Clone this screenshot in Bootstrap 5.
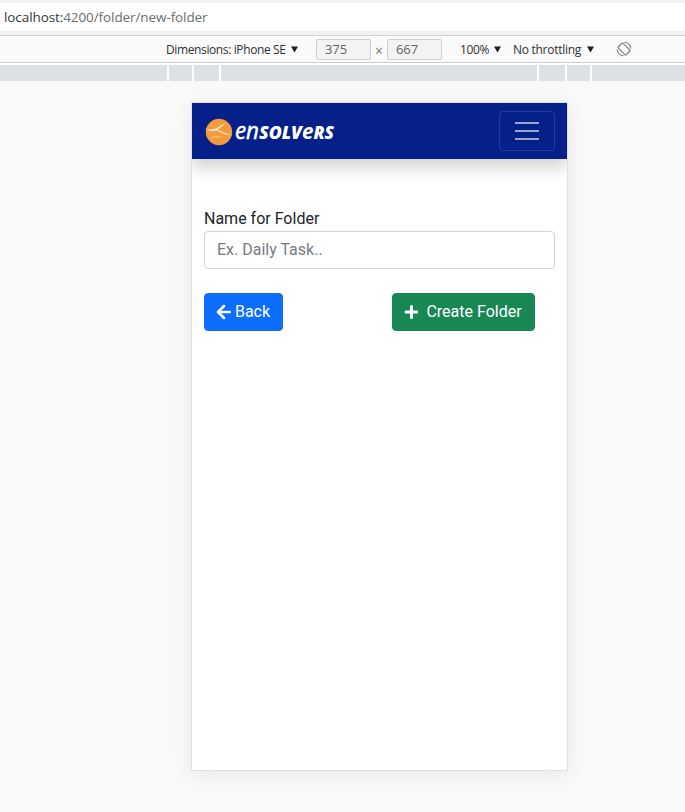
<!DOCTYPE html>
<html lang="en">
<head>
<meta charset="utf-8">
<meta name="viewport" content="width=device-width, initial-scale=1">
<title>New folder</title>
<link href="https://cdn.jsdelivr.net/npm/bootstrap@5.3.0/dist/css/bootstrap.min.css" rel="stylesheet">
<style>
body { background: #f9f9f9; height: 812px; overflow: hidden; font-family: Roboto, "Liberation Sans", sans-serif; }
.address-bar { height: 35px; border-top: 3px solid #f1f1f2; border-bottom: 4px solid #f1f1f2; font: 13.5px/28px "Open Sans", sans-serif; padding-left: 4px; color: #6a6d70; }
.address-bar .host { color: #34373a; }
.address-text { letter-spacing: -.09px; }
.devtools { height: 28px; border-top: 1px solid #cfd1d3; border-bottom: 1px solid #cacdd1; background: #fafafa; padding-left: 166px; font: 12px/26px "Open Sans", sans-serif; color: #303134; }
.devtools svg { flex: none; }
.tool-label { white-space: nowrap; padding-top: 1px; }
.w-device { width: 121px; letter-spacing: -.38px; }
.w-zoom { width: 30px; letter-spacing: -.4px; margin-left: 18px; }
.w-throttle { width: 70px; letter-spacing: -.28px; margin-left: 12px; }
.size-field { width: 55px; height: 21px; border: 1px solid #cdcfd1; border-radius: 2px; background: #f3f3f3; padding-left: 8px; font-size: 13px; line-height: 19px; color: #5f6368; letter-spacing: -.1px; }
.size-first { margin-left: 18px; }
.rotate-icon { margin-left: 22px; }
.times { width: 16px; text-align: center; color: #777; font-size: 14px; padding-top: 3px; }
.ruler { height: 18px; border-top: 2px solid #fff; display: grid; grid-template-columns: 167px 23px 25px 316px 26px 23px 1fr; column-gap: 2px; background: #fff; }
.ruler span { background: #dde0e4; }
.device { width: 377px; height: 669px; margin: 21px 0 0 191px; border: 1px solid #e0e0e0; background: #fff; box-shadow: 0 4px 20px rgba(0,0,0,.07); }
.app-nav { height: 56px; background: #06208a; box-shadow: 0 8px 16px rgba(0,0,0,.19); clip-path: inset(0 0 -30px 0); }
.app-nav .navbar-toggler { width: 56px; height: 40px; border-color: rgba(255,255,255,.12); border-radius: 4px; }
.app-form { padding-top: 48px; }
.app-form .form-control, .app-form .btn { border-radius: 4px; }
.app-form .form-control { border-color: #ced4da; height: 38px; padding-top: 5px; padding-bottom: 7px; }
.app-form .form-control::placeholder { color: #757c83; }
.app-form .btn-primary { width: 79px; }
.app-form .btn-success { width: 143px; margin-right: 20px; }
.app-form .btn svg { margin-left: -1px; }
</style>
<script src="https://cdn.jsdelivr.net/npm/bootstrap@5.3.0/dist/js/bootstrap.bundle.min.js"></script>
</head>
<body>
<div class="address-bar bg-white"><span class="address-text"><span class="host">localhost:</span>4200/folder/new-folder</span></div>
<div class="devtools d-flex align-items-center">
  <span class="tool-label w-device">Dimensions: iPhone SE</span>
  <svg class="ms-1" width="7" height="7" viewBox="0 0 8 7"><path d="M0 0h8L4 7z" fill="#202124"/></svg>
  <span class="size-field size-first">375</span>
  <span class="times">×</span>
  <span class="size-field">667</span>
  <span class="tool-label w-zoom">100%</span>
  <svg class="ms-1" width="7" height="7" viewBox="0 0 8 7"><path d="M0 0h8L4 7z" fill="#202124"/></svg>
  <span class="tool-label w-throttle">No throttling</span>
  <svg class="ms-1" width="7" height="7" viewBox="0 0 8 7"><path d="M0 0h8L4 7z" fill="#202124"/></svg>
  <svg class="rotate-icon" width="16" height="16" viewBox="0 0 16 16" fill="none" stroke="#777" stroke-width="1.1"><rect x="4.6" y="2.4" width="6.8" height="11.2" rx="1" transform="rotate(-45 8 8)"/><path d="M8.5 1.2a6.8 6.8 0 0 1 6.3 6.3M7.5 14.8a6.8 6.8 0 0 1-6.3-6.3"/></svg>
</div>
<div class="ruler"><span></span><span></span><span></span><span></span><span></span><span></span><span></span></div>

<main class="device">
  <nav class="app-nav navbar navbar-dark px-2 py-0">
    <a class="navbar-brand p-0 m-0 ms-1" href="#" aria-label="Ensolvers">
      <svg class="d-block" width="134" height="32" viewBox="0 0 134 32">
        <circle cx="15" cy="17" r="13.2" fill="#f39a3c"/>
        <path d="M0 12.5c3 2.5 7 2.5 11 1 4-1 5-3 10-5.5-1.5 3-5 4.5-7 6.5 2 1.5 3 1.5 6 3 3 1 5 2.5 9 2.5-5 .5-8-.5-11-2-3-1-4-2-6-2.5-4 1.5-9 .5-12-3z" fill="#ffe1bd"/>
        <path d="M7 22.5c4-1.5 6 .5 10-1" fill="none" stroke="#fbc58b"/>
        <g font-family="'Open Sans', sans-serif" font-style="italic" fill="#fff">
          <text x="31" y="24" font-size="23" font-weight="400" stroke="#fff" stroke-width=".5" textLength="24" lengthAdjust="spacingAndGlyphs">en</text>
          <text x="55" y="24" font-size="18" font-weight="800" textLength="43" lengthAdjust="spacingAndGlyphs">SOLV</text>
          <text x="98" y="24" font-size="22" font-weight="700" textLength="11.5" lengthAdjust="spacingAndGlyphs">e</text>
          <text x="109.5" y="24" font-size="18" font-weight="800" textLength="20.5" lengthAdjust="spacingAndGlyphs">RS</text>
        </g>
      </svg>
    </a>
    <button class="navbar-toggler p-0 me-1 d-flex align-items-center justify-content-center" type="button" aria-label="Toggle navigation">
      <svg width="24" height="20" viewBox="0 0 24 20"><path d="M0 2h24M0 10h24M0 18h24" stroke="#9ba6d0" stroke-width="2"/></svg>
    </button>
  </nav>
  <form class="app-form container-fluid">
    <label for="folder" class="d-block">Name for Folder</label>
    <input id="folder" class="form-control" type="text" placeholder="Ex. Daily Task..">
    <div class="d-flex justify-content-between mt-4">
      <button class="btn btn-primary px-0 d-flex align-items-center justify-content-center" type="button">
        <svg class="me-1" width="15" height="16" viewBox="0 0 15 16" fill="none" stroke="#fff" stroke-width="2.5" stroke-linecap="round" stroke-linejoin="round"><path d="M8 2 2 8l6 6M2.5 8H14"/></svg>Back
      </button>
      <button class="btn btn-success px-0 d-flex align-items-center justify-content-center" type="button">
        <svg class="me-2" width="14" height="16" viewBox="0 0 14 16" fill="none" stroke="#fff" stroke-width="3" stroke-linecap="round"><path d="M7.5 2.5v11M2 8h11"/></svg>Create Folder
      </button>
    </div>
  </form>
</main>
</body>
</html>
